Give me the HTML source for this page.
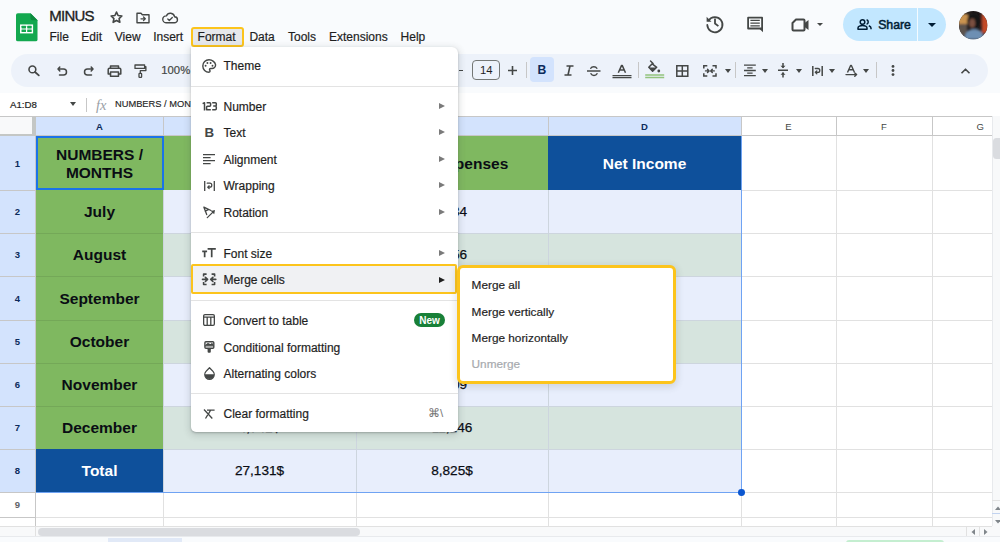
<!DOCTYPE html>
<html><head><meta charset="utf-8">
<style>
*{box-sizing:border-box;margin:0;padding:0}
html,body{width:1000px;height:542px;overflow:hidden;background:#f9fbfd;font-family:"Liberation Sans",sans-serif;position:relative}
.a{position:absolute}
.t{position:absolute;white-space:nowrap;line-height:1}
svg{position:absolute;overflow:visible}
.tm{position:absolute;top:31px;font-size:12px;color:#1f1f1f;white-space:nowrap;line-height:1;-webkit-text-stroke:0.2px #1f1f1f}
.ic{fill:none;stroke:#444746;stroke-width:1.6;stroke-linecap:round;stroke-linejoin:round}
.icf{fill:#444746;stroke:none}
.dd{position:absolute;width:0;height:0;border-top:4px solid #444746;border-left:4px solid transparent;border-right:4px solid transparent}
.tsep{position:absolute;top:62px;width:1px;height:16px;background:#c7c7c7}
.vl{position:absolute;width:1px;background:#e1e1e1}
.hl{position:absolute;height:1px;background:#e1e1e1}
.cell{position:absolute;display:flex;align-items:center;justify-content:center;text-align:center;font-size:15.5px;font-weight:bold;color:#0a0d14;line-height:18px;padding-top:1px}
.num{font-weight:normal;font-size:13.6px;padding-top:1.5px;-webkit-text-stroke:0.25px #0a0d14}
.rh{position:absolute;left:0;width:35px;background:#d3e3fd;color:#0b2b5c;font-size:9.5px;font-weight:bold;display:flex;align-items:center;justify-content:center}
.ch{position:absolute;top:117px;height:19px;padding-bottom:1px;background:#d3e3fd;color:#0b2b5c;font-size:9.5px;font-weight:bold;display:flex;align-items:center;justify-content:center}
.mi{position:absolute;left:223.5px;font-size:12px;color:#1f1f1f;white-space:nowrap;line-height:1;-webkit-text-stroke:0.2px #1f1f1f}
.arr{position:absolute;left:438.5px;width:0;height:0;border-left:6px solid #7a7a7a;border-top:3px solid transparent;border-bottom:3px solid transparent}
.sep{position:absolute;left:191px;width:267px;height:1px;background:#e3e3e3}
</style></head><body>

<!-- ============ TOP BAR ============ -->
<svg style="left:15.5px;top:12.5px" width="21.5" height="28.5" viewBox="0 0 23 30">
  <path d="M2 0H15.5L23 7.5V28A2 2 0 0 1 21 30H2A2 2 0 0 1 0 28V2A2 2 0 0 1 2 0Z" fill="#13a84f"/>
  <path d="M15.5 0V5.5A2 2 0 0 0 17.5 7.5H23Z" fill="#0c8a3e"/>
  <rect x="4.3" y="12" width="14" height="9.6" fill="#fff"/>
  <rect x="5.9" y="13.5" width="4.8" height="2.8" rx=".4" fill="#13a84f"/>
  <rect x="12" y="13.5" width="4.8" height="2.8" rx=".4" fill="#13a84f"/>
  <rect x="5.9" y="17.4" width="4.8" height="2.7" rx=".4" fill="#13a84f"/>
  <rect x="12" y="17.4" width="4.8" height="2.7" rx=".4" fill="#13a84f"/>
</svg>
<div class="t" style="left:49.3px;top:8.3px;font-size:15px;color:#1f1f1f;letter-spacing:-0.75px;-webkit-text-stroke:0.35px #1f1f1f">MINUS</div>
<!-- star -->
<svg style="left:108.8px;top:9.6px" width="15" height="15" viewBox="0 0 24 24"><path class="ic" style="stroke-width:2.6" d="M12 3.3l2.55 5.5 6.05.75-4.45 4.15 1.2 5.95L12 16.7l-5.35 2.95 1.2-5.95L3.4 9.55l6.05-.75z"/></svg>
<!-- move folder -->
<svg style="left:136px;top:12px" width="14" height="12" viewBox="0 0 14 12"><path class="ic" style="stroke-width:1.4" d="M1 1.2h4l1.3 1.5H13v8.1H1z"/><path class="ic" style="stroke-width:1.3" d="M5 6.8h4M7.5 5l1.8 1.8-1.8 1.8"/></svg>
<!-- cloud -->
<svg style="left:161.8px;top:11.8px" width="16" height="12" viewBox="0 0 16 12"><path class="ic" style="stroke-width:1.4" d="M4 10.8h8.3a3 3 0 0 0 .3-6A4.3 4.3 0 0 0 4.4 3.9 3.4 3.4 0 0 0 4 10.8z"/><path class="ic" style="stroke-width:1.3" d="M5.8 7l1.5 1.5 3-3"/></svg>

<div class="tm" style="left:49.5px">File</div>
<div class="tm" style="left:81.3px">Edit</div>
<div class="tm" style="left:114.8px">View</div>
<div class="tm" style="left:153.2px">Insert</div>
<div class="a" style="left:191px;top:27px;width:52.5px;height:20px;border:2px solid #fcc41c;border-radius:3px;background:#e6e8eb"></div>
<div class="tm" style="left:197.6px">Format</div>
<div class="tm" style="left:249.4px">Data</div>
<div class="tm" style="left:288px">Tools</div>
<div class="tm" style="left:329px">Extensions</div>
<div class="tm" style="left:400.6px">Help</div>

<!-- right icons -->
<svg style="left:704.6px;top:13.2px" width="20" height="20" viewBox="0 0 20 20"><path class="ic" style="stroke-width:1.8" d="M3.6 7.4A7.6 7.6 0 1 1 2.3 12"/><path class="icf" d="M1.6 3.8v4.9h4.9z"/><path class="ic" style="stroke-width:1.8;stroke-linecap:butt" d="M10 5.6v4.9l3.4 2.6"/></svg>
<svg style="left:746px;top:15px" width="19" height="18" viewBox="0 0 19 18"><path fill="none" stroke="#444746" stroke-width="1.8" stroke-linejoin="round" d="M2.1 2.7H16.1V13.5H2.1z"/><path fill="#444746" d="M12.5 13H17V17.3z"/><path stroke="#444746" stroke-width="1.3" d="M4.4 5.4h9.4M4.4 8.1h9.4M4.4 10.8h9.4"/></svg>
<svg style="left:791px;top:18px" width="19" height="14" viewBox="0 0 19 14">
  <path class="ic" style="stroke-width:2" d="M5 1.5h7.5a1 1 0 0 1 1 1v9a1 1 0 0 1-1 1H2.5a1 1 0 0 1-1-1V5z"/><path class="icf" d="M13 5.5l4.5-3.5v10L13 8.5z"/>
</svg>
<div class="dd" style="left:817px;top:22.5px;border-top-width:3.5px;border-left-width:3.5px;border-right-width:3.5px"></div>

<div class="a" style="left:842.5px;top:7.5px;width:103px;height:33px;border-radius:16.5px;background:#c2e7ff"></div>
<div class="a" style="left:917px;top:7.5px;width:1px;height:33px;background:#f4fbff"></div>
<svg style="left:857px;top:18.5px" width="15" height="11" viewBox="0 0 15 11">
  <circle cx="5.5" cy="3" r="2.3" fill="none" stroke="#001d35" stroke-width="1.5"/>
  <path d="M1 10.2v-1.2c0-1.5 2.2-2.6 4.5-2.6s4.5 1.1 4.5 2.6v1.2z" fill="none" stroke="#001d35" stroke-width="1.5" stroke-linejoin="round"/>
  <path d="M9.6 0.8a2.3 2.3 0 0 1 0 4.4M11.8 6.8c1.3.5 2.2 1.2 2.2 2.2v1.2" fill="none" stroke="#001d35" stroke-width="1.5"/>
</svg>
<div class="t" style="left:878.2px;top:19px;font-size:12.3px;color:#001d35;-webkit-text-stroke:0.5px #001d35;letter-spacing:-0.05px">Share</div>
<div class="dd" style="left:927.8px;top:23px;border-top:4px solid #001d35"></div>

<!-- avatar -->
<svg style="left:958.6px;top:10.6px" width="28.4" height="28.4" viewBox="0 0 28 28">
<defs><clipPath id="av"><circle cx="14" cy="14" r="14"/></clipPath><filter id="bl"><feGaussianBlur stdDeviation="0.9"/></filter></defs>
<g clip-path="url(#av)">
<rect width="28" height="28" fill="#231d1d"/>
<g filter="url(#bl)">
<rect x="-1" y="3" width="10" height="10" fill="#c99350"/>
<rect x="-1" y="13" width="9" height="12" fill="#5b534d"/>
<rect x="22.5" y="2" width="7" height="20" fill="#c24a26"/>
<ellipse cx="15" cy="10" rx="7" ry="8" fill="#141214"/>
<ellipse cx="13" cy="12" rx="3" ry="4.5" fill="#7a5040"/>
<path d="M5 28 C6 20 10 18 15 18 C20 18 24 20 25 28z" fill="#6d8fb3"/>
</g>
</g>
</svg>

<!-- ============ TOOLBAR ============ -->
<div class="a" style="left:11px;top:53.5px;width:976.5px;height:33px;border-radius:16.5px;background:#edf2fa"></div>
<!-- search -->
<svg style="left:28px;top:65px" width="12" height="11" viewBox="0 0 12 11"><circle cx="4.4" cy="4.4" r="3.4" class="ic" style="stroke-width:1.6"/><path class="ic" style="stroke-width:1.8" d="M7 7l3.8 3.4"/></svg>
<!-- undo -->
<svg style="left:57px;top:66px" width="11" height="10" viewBox="0 0 11 10"><path class="ic" style="stroke-width:1.5" d="M2.8 1L1 3l1.8 2M1.2 3h5.3a3 3 0 0 1 0 6H2.5"/></svg>
<!-- redo -->
<svg style="left:83px;top:66px" width="11" height="10" viewBox="0 0 11 10"><path class="ic" style="stroke-width:1.5" d="M8.2 1L10 3l-1.8 2M9.8 3H4.5a3 3 0 0 0 0 6h4"/></svg>
<!-- print -->
<svg style="left:107px;top:64.5px" width="15" height="12" viewBox="0 0 15 12"><path class="ic" style="stroke-width:1.5" d="M3.5 3.2V1h8v2.2M3.5 9H1.2V4.5a1.3 1.3 0 0 1 1.3-1.3h10a1.3 1.3 0 0 1 1.3 1.3V9h-2.3"/><rect x="3.5" y="7" width="8" height="4.2" class="ic" style="stroke-width:1.5"/></svg>
<!-- paint format -->
<svg style="left:133.5px;top:64px" width="13" height="14" viewBox="0 0 13 14"><path class="ic" style="stroke-width:1.3" d="M1 1h9.6v3.4H1zM10.6 2.7h1.3v3.9H6.3v2.7"/><rect x="5" y="9.3" width="2.6" height="4" rx=".6" class="ic" style="stroke-width:1.3"/></svg>
<div class="t" style="left:161.3px;top:65px;font-size:11.3px;color:#444746;-webkit-text-stroke:0.2px #444746">100%</div>

<div class="a" style="left:458.6px;top:69.5px;width:4.5px;height:1.5px;background:#444746"></div>
<div class="a" style="left:472px;top:60px;width:28px;height:20px;border:1px solid #747775;border-radius:4px"></div>
<div class="t" style="left:480px;top:65px;font-size:11.3px;color:#1f1f1f">14</div>
<svg style="left:507.5px;top:65.5px" width="9" height="9" viewBox="0 0 9 9"><path class="ic" style="stroke-width:1.6;stroke-linecap:butt" d="M4.5 0v9M0 4.5h9"/></svg>
<div class="tsep" style="left:525.5px"></div>
<div class="a" style="left:529.7px;top:57px;width:24.3px;height:24.5px;border-radius:4px;background:#d3e3fd"></div>
<div class="t" style="left:537.4px;top:64.2px;font-size:12.2px;font-weight:bold;color:#0b2b5c">B</div>
<svg style="left:563.5px;top:64.5px" width="10" height="11" viewBox="0 0 10 11"><path class="ic" style="stroke-width:1.6;stroke-linecap:butt" d="M2.5 1H9.5M0.5 10H7.5M6 1L4 10"/></svg>
<svg style="left:587.3px;top:64.5px" width="14" height="12" viewBox="0 0 14 12"><path class="ic" style="stroke-width:1.5;stroke-linecap:butt" d="M0 6h13.5"/><path class="ic" style="stroke-width:1.5" d="M3.8 3.3a3.2 2.5 0 0 1 6 0M4 8.8a3.2 2.5 0 0 0 6 0"/></svg>
<svg style="left:611.5px;top:62.5px" width="20" height="15" viewBox="0 0 20 15"><path class="ic" style="stroke-width:1.5;stroke-linecap:butt" d="M6.3 9.8L9.6 2.4h.6l3.3 7.4M7.5 7h4.8"/><path d="M0.5 12.6h19M0.5 14.6h19" stroke="#444746" stroke-width="1.3"/></svg>
<div class="tsep" style="left:638px"></div>
<svg style="left:645px;top:60px" width="20" height="19" viewBox="0 0 20 19"><path d="M5.5 1l2.6 2.6" stroke="#444746" stroke-width="1.4" stroke-linecap="round"/><path d="M7.2 3.8L3.8 7.3l3.8 4 4.1-4z" fill="none" stroke="#444746" stroke-width="1.5" stroke-linejoin="round"/><path d="M4.4 7.5h7.2L7.6 11.5z" fill="#444746"/><circle cx="13.8" cy="11" r="1.4" fill="#444746"/><path d="M0.2 15h19M0.2 17.5h19" stroke="#93c47d" stroke-width="1.3"/></svg>
<svg style="left:675.8px;top:64.5px" width="13" height="12" viewBox="0 0 13 12"><path class="ic" style="stroke-width:1.5;stroke-linecap:butt;stroke-linejoin:miter" d="M0.8 0.8h11v10.5h-11zM6.3 0.8v10.5M0.8 6h11"/></svg>
<svg style="left:702.8px;top:64.5px" width="14" height="12" viewBox="0 0 14 12"><path class="ic" style="stroke-width:1.5;stroke-linecap:butt;stroke-linejoin:miter" d="M0.8 3.5V0.8h3.5M0.8 8.3v2.7h3.5M13 3.5V0.8H9.5M13 8.3v2.7H9.5"/><path class="ic" style="stroke-width:1.4" d="M2.5 5.9h3.3M4.5 4.2l1.6 1.7-1.6 1.7M11.3 5.9H8M9.3 4.2L7.7 5.9l1.6 1.7"/></svg>
<div class="dd" style="left:724.5px;top:68.5px;border-top-width:4px;border-left-width:3px;border-right-width:3px"></div>
<div class="tsep" style="left:735px"></div>
<svg style="left:743.8px;top:64px" width="12" height="12" viewBox="0 0 12 12"><path stroke="#444746" stroke-width="1.3" d="M0 1.1h11.8M3.2 3.9h5.4M0 6.5h11.8M3.2 9.1h5.4M0 11.7h11.8"/></svg>
<div class="dd" style="left:762.3px;top:68.5px;border-top-width:4px;border-left-width:3px;border-right-width:3px"></div>
<svg style="left:778px;top:63px" width="10" height="14.5" viewBox="0 0 10 14.5"><path stroke="#444746" stroke-width="1.5" d="M0 7.2h10M5 0v4.8M5 9.5v5"/><path fill="#444746" d="M2.5 2.8L5 5.3l2.5-2.5zM2.5 11.7L5 9.2l2.5 2.5z"/></svg>
<div class="dd" style="left:795.6px;top:68.5px;border-top-width:4px;border-left-width:3px;border-right-width:3px"></div>
<svg style="left:811.8px;top:65.5px" width="11" height="10" viewBox="0 0 11 10"><path stroke="#444746" stroke-width="1.5" d="M.8 0v10M10.2 0v10"/><path class="ic" style="stroke-width:1.3" d="M3.3 2.5h2.6a1.9 1.9 0 0 1 0 3.8H3.5M4.8 4.9L3.3 6.3l1.5 1.4"/></svg>
<div class="dd" style="left:828.9px;top:68.5px;border-top-width:4px;border-left-width:3px;border-right-width:3px"></div>
<svg style="left:845.5px;top:64.5px" width="12" height="12" viewBox="0 0 12 12"><path class="ic" style="stroke-width:1.4;stroke-linecap:butt" d="M1.5 7.5L4.6 0.5h.8l3.1 7M2.8 4.8h4.4"/><path class="ic" style="stroke-width:1.4" d="M0 9.6h10.5M8.8 7.9l1.8 1.7-1.8 1.7"/></svg>
<div class="dd" style="left:862.7px;top:68.5px;border-top-width:4px;border-left-width:3px;border-right-width:3px"></div>
<div class="tsep" style="left:875.5px"></div>
<svg style="left:890.5px;top:65px" width="4" height="11" viewBox="0 0 4 11"><circle cx="2" cy="1.4" r="1.4" fill="#444746"/><circle cx="2" cy="5.5" r="1.4" fill="#444746"/><circle cx="2" cy="9.6" r="1.4" fill="#444746"/></svg>
<svg style="left:961px;top:68px" width="9" height="6" viewBox="0 0 9 6"><path class="ic" style="stroke-width:1.6;stroke-linecap:butt" d="M0.5 5.3L4.5 1.2l4 4.1"/></svg>

<!-- ============ FORMULA BAR ============ -->
<div class="a" style="left:0;top:93px;width:1000px;height:23px;background:#fff"></div>
<div class="t" style="left:10px;top:99.8px;font-size:9.7px;color:#1f1f1f;-webkit-text-stroke:0.2px #1f1f1f">A1:D8</div>
<div class="dd" style="left:69.5px;top:102px;border-top-width:4px;border-left-width:3px;border-right-width:3px;margin-left:0.5px"></div>
<div class="a" style="left:86px;top:98px;width:1px;height:14px;background:#c7c7c7"></div>
<div class="t" style="left:96px;top:98px;font-size:14.5px;color:#9aa0a6;font-family:'Liberation Serif',serif;font-style:italic">fx</div>
<div class="t" style="left:115px;top:99.6px;font-size:9.3px;color:#1f1f1f;-webkit-text-stroke:0.15px #1f1f1f">NUMBERS / MONTHS</div>

<!-- ============ GRID ============ -->
<div class="a" style="left:0;top:116px;width:1000px;height:426px;background:#fff"></div>
<div class="a" style="left:0;top:117px;width:36px;height:19px;background:#c4c7c5"></div>
<div class="a" style="left:0;top:117px;width:32px;height:16.5px;background:#f8f9fa"></div>
<div class="ch" style="left:36px;width:127px;background:#d3e3fd;color:#0b2b5c;font-weight:bold;">A</div>
<div class="ch" style="left:163px;width:193px;background:#d3e3fd;color:#0b2b5c;font-weight:bold;">B</div>
<div class="ch" style="left:356px;width:192px;background:#d3e3fd;color:#0b2b5c;font-weight:bold;">C</div>
<div class="ch" style="left:548px;width:193px;background:#d3e3fd;color:#0b2b5c;font-weight:bold;">D</div>
<div class="ch" style="left:741px;width:95px;background:#ffffff;color:#444746;font-weight:normal;">E</div>
<div class="ch" style="left:836px;width:96px;background:#ffffff;color:#444746;font-weight:normal;">F</div>
<div class="ch" style="left:932px;width:60px;background:#ffffff;color:#444746;font-weight:normal;justify-content:flex-end;padding-right:8px;">G</div>
<div class="a" style="left:163px;top:117px;width:1px;height:19px;background:#c7c7c7"></div>
<div class="a" style="left:356px;top:117px;width:1px;height:19px;background:#c7c7c7"></div>
<div class="a" style="left:548px;top:117px;width:1px;height:19px;background:#c7c7c7"></div>
<div class="a" style="left:741px;top:117px;width:1px;height:19px;background:#c7c7c7"></div>
<div class="a" style="left:836px;top:117px;width:1px;height:19px;background:#c7c7c7"></div>
<div class="a" style="left:932px;top:117px;width:1px;height:19px;background:#c7c7c7"></div>
<div class="a" style="left:992px;top:117px;width:1px;height:19px;background:#c7c7c7"></div>
<div class="a" style="left:0;top:116px;width:992px;height:1px;background:#c7c7c7"></div>
<div class="a" style="left:35px;top:135px;width:957px;height:1px;background:#c7c7c7"></div>
<div class="rh" style="top:136px;height:54px;background:#d3e3fd;color:#0b2b5c;font-weight:bold;">1</div>
<div class="rh" style="top:190px;height:43px;background:#d3e3fd;color:#0b2b5c;font-weight:bold;">2</div>
<div class="rh" style="top:233px;height:43px;background:#d3e3fd;color:#0b2b5c;font-weight:bold;">3</div>
<div class="rh" style="top:276px;height:44px;background:#d3e3fd;color:#0b2b5c;font-weight:bold;">4</div>
<div class="rh" style="top:320px;height:43px;background:#d3e3fd;color:#0b2b5c;font-weight:bold;">5</div>
<div class="rh" style="top:363px;height:43px;background:#d3e3fd;color:#0b2b5c;font-weight:bold;">6</div>
<div class="rh" style="top:406px;height:43px;background:#d3e3fd;color:#0b2b5c;font-weight:bold;">7</div>
<div class="rh" style="top:449px;height:43px;background:#d3e3fd;color:#0b2b5c;font-weight:bold;">8</div>
<div class="rh" style="top:492px;height:25px;background:#ffffff;color:#5f6368;font-weight:bold;">9</div>
<div class="rh" style="top:517px;height:9px;background:#ffffff;color:#5f6368;font-weight:bold;"></div>
<div class="a" style="left:0;top:190px;width:35px;height:1px;background:#c7c7c7"></div>
<div class="a" style="left:0;top:233px;width:35px;height:1px;background:#c7c7c7"></div>
<div class="a" style="left:0;top:276px;width:35px;height:1px;background:#c7c7c7"></div>
<div class="a" style="left:0;top:320px;width:35px;height:1px;background:#c7c7c7"></div>
<div class="a" style="left:0;top:363px;width:35px;height:1px;background:#c7c7c7"></div>
<div class="a" style="left:0;top:406px;width:35px;height:1px;background:#c7c7c7"></div>
<div class="a" style="left:0;top:449px;width:35px;height:1px;background:#c7c7c7"></div>
<div class="a" style="left:0;top:492px;width:35px;height:1px;background:#c7c7c7"></div>
<div class="a" style="left:0;top:517px;width:35px;height:1px;background:#c7c7c7"></div>
<div class="a" style="left:0;top:526px;width:35px;height:1px;background:#c7c7c7"></div>
<div class="a" style="left:35px;top:136px;width:1px;height:390px;background:#c7c7c7"></div>
<div class="cell " style="left:36px;top:136px;width:127px;height:54px;background:#7fb860;">NUMBERS /<br>MONTHS</div>
<div class="cell " style="left:36px;top:190px;width:127px;height:43px;background:#7fb860;">July</div>
<div class="cell " style="left:36px;top:233px;width:127px;height:43px;background:#7fb860;">August</div>
<div class="cell " style="left:36px;top:276px;width:127px;height:44px;background:#7fb860;">September</div>
<div class="cell " style="left:36px;top:320px;width:127px;height:43px;background:#7fb860;">October</div>
<div class="cell " style="left:36px;top:363px;width:127px;height:43px;background:#7fb860;">November</div>
<div class="cell " style="left:36px;top:406px;width:127px;height:43px;background:#7fb860;">December</div>
<div class="cell " style="left:36px;top:449px;width:127px;height:43px;background:#0e509b;color:#ffffff;">Total</div>
<div class="cell " style="left:163px;top:136px;width:193px;height:54px;background:#7fb860;">Total Income</div>
<div class="cell " style="left:356px;top:136px;width:192px;height:54px;background:#7fb860;">Total Expenses</div>
<div class="cell " style="left:548px;top:136px;width:193px;height:54px;background:#0e509b;color:#ffffff;">Net Income</div>
<div class="cell num" style="left:163px;top:190px;width:193px;height:43px;background:#e8eefc;">4,521$</div>
<div class="cell num" style="left:356px;top:190px;width:192px;height:43px;background:#e8eefc;">1234</div>
<div class="cell num" style="left:548px;top:190px;width:193px;height:43px;background:#e8eefc;"></div>
<div class="cell num" style="left:163px;top:233px;width:193px;height:43px;background:#d6e4de;">4,356$</div>
<div class="cell num" style="left:356px;top:233px;width:192px;height:43px;background:#d6e4de;">1456</div>
<div class="cell num" style="left:548px;top:233px;width:193px;height:43px;background:#d6e4de;"></div>
<div class="cell num" style="left:163px;top:276px;width:193px;height:44px;background:#e8eefc;">4,498$</div>
<div class="cell num" style="left:356px;top:276px;width:192px;height:44px;background:#e8eefc;">1389</div>
<div class="cell num" style="left:548px;top:276px;width:193px;height:44px;background:#e8eefc;"></div>
<div class="cell num" style="left:163px;top:320px;width:193px;height:43px;background:#d6e4de;">4,612$</div>
<div class="cell num" style="left:356px;top:320px;width:192px;height:43px;background:#d6e4de;">1457</div>
<div class="cell num" style="left:548px;top:320px;width:193px;height:43px;background:#d6e4de;"></div>
<div class="cell num" style="left:163px;top:363px;width:193px;height:43px;background:#e8eefc;">4,402$</div>
<div class="cell num" style="left:356px;top:363px;width:192px;height:43px;background:#e8eefc;">1509</div>
<div class="cell num" style="left:548px;top:363px;width:193px;height:43px;background:#e8eefc;"></div>
<div class="cell num" style="left:163px;top:406px;width:193px;height:43px;background:#d6e4de;">4,742$</div>
<div class="cell num" style="left:356px;top:406px;width:192px;height:43px;background:#d6e4de;">11,146</div>
<div class="cell num" style="left:548px;top:406px;width:193px;height:43px;background:#d6e4de;"></div>
<div class="cell num" style="left:163px;top:449px;width:193px;height:43px;background:#e8eefc;">27,131$</div>
<div class="cell num" style="left:356px;top:449px;width:192px;height:43px;background:#e8eefc;">8,825$</div>
<div class="cell num" style="left:548px;top:449px;width:193px;height:43px;background:#e8eefc;"></div>
<div class="a" style="left:163px;top:190px;width:1px;height:302px;background:#cdd5de"></div>
<div class="a" style="left:356px;top:190px;width:1px;height:302px;background:#cdd5de"></div>
<div class="a" style="left:548px;top:190px;width:1px;height:302px;background:#cdd5de"></div>
<div class="a" style="left:163px;top:233px;width:578px;height:1px;background:#cdd5de"></div>
<div class="a" style="left:163px;top:276px;width:578px;height:1px;background:#cdd5de"></div>
<div class="a" style="left:163px;top:320px;width:578px;height:1px;background:#cdd5de"></div>
<div class="a" style="left:163px;top:363px;width:578px;height:1px;background:#cdd5de"></div>
<div class="a" style="left:163px;top:406px;width:578px;height:1px;background:#cdd5de"></div>
<div class="a" style="left:163px;top:449px;width:578px;height:1px;background:#cdd5de"></div>
<div class="a" style="left:36px;top:233px;width:127px;height:1px;background:#74a858"></div>
<div class="a" style="left:36px;top:276px;width:127px;height:1px;background:#74a858"></div>
<div class="a" style="left:36px;top:320px;width:127px;height:1px;background:#74a858"></div>
<div class="a" style="left:36px;top:363px;width:127px;height:1px;background:#74a858"></div>
<div class="a" style="left:36px;top:406px;width:127px;height:1px;background:#74a858"></div>
<div class="a" style="left:836px;top:136px;width:1px;height:390px;background:#e1e1e1"></div>
<div class="a" style="left:932px;top:136px;width:1px;height:390px;background:#e1e1e1"></div>
<div class="a" style="left:992px;top:136px;width:1px;height:390px;background:#e1e1e1"></div>
<div class="a" style="left:741px;top:190px;width:251px;height:1px;background:#e1e1e1"></div>
<div class="a" style="left:741px;top:233px;width:251px;height:1px;background:#e1e1e1"></div>
<div class="a" style="left:741px;top:276px;width:251px;height:1px;background:#e1e1e1"></div>
<div class="a" style="left:741px;top:320px;width:251px;height:1px;background:#e1e1e1"></div>
<div class="a" style="left:741px;top:363px;width:251px;height:1px;background:#e1e1e1"></div>
<div class="a" style="left:741px;top:406px;width:251px;height:1px;background:#e1e1e1"></div>
<div class="a" style="left:741px;top:449px;width:251px;height:1px;background:#e1e1e1"></div>
<div class="a" style="left:741px;top:492px;width:251px;height:1px;background:#e1e1e1"></div>
<div class="a" style="left:741px;top:517px;width:251px;height:1px;background:#e1e1e1"></div>
<div class="a" style="left:163px;top:492px;width:1px;height:34px;background:#e1e1e1"></div>
<div class="a" style="left:356px;top:492px;width:1px;height:34px;background:#e1e1e1"></div>
<div class="a" style="left:548px;top:492px;width:1px;height:34px;background:#e1e1e1"></div>
<div class="a" style="left:741px;top:492px;width:1px;height:34px;background:#e1e1e1"></div>
<div class="a" style="left:36px;top:517px;width:705px;height:1px;background:#e1e1e1"></div>
<div class="a" style="left:741px;top:136px;width:1px;height:357px;background:#6fa3f3"></div>
<div class="a" style="left:36px;top:492px;width:706px;height:1px;background:#6fa3f3"></div>
<div class="a" style="left:36px;top:136px;width:128px;height:54px;border:2px solid #1a73e8"></div>
<div class="a" style="left:738.2px;top:489.4px;width:6.8px;height:6.8px;border-radius:50%;background:#0b57d0"></div>
<div class="a" style="left:0;top:526px;width:1000px;height:11px;background:#f8f9fa"></div>
<div class="a" style="left:0;top:526px;width:992px;height:1px;background:#e1e1e1"></div>
<div class="a" style="left:38px;top:528px;width:322px;height:7.5px;border-radius:4px;background:#dadce0"></div>
<div class="a" style="left:35px;top:526px;width:1px;height:10px;background:#e1e1e1"></div>
<div class="a" style="left:0;top:537px;width:1000px;height:5px;background:#f9fbfd"></div>
<div class="a" style="left:0;top:536px;width:1000px;height:1px;background:#e8eaed"></div>
<div class="a" style="left:108px;top:537.5px;width:74px;height:5px;background:#e1e9f7"></div>
<div class="a" style="left:846px;top:539.5px;width:98px;height:3px;border-radius:3px 3px 0 0;background:#c4eed0"></div>
<div class="a" style="left:992px;top:116px;width:8px;height:410px;background:#f8f9fa"></div>
<div class="a" style="left:992px;top:116px;width:1px;height:410px;background:#e8eaed"></div>
<div class="a" style="left:993px;top:138px;width:7px;height:21px;border-radius:3.5px 0 0 3.5px;background:#dadce0"></div>
<div class="a" style="left:992px;top:500px;width:8px;height:1px;background:#e1e1e1"></div>
<svg style="left:994.5px;top:506px" width="6" height="4" viewBox="0 0 6 4"><path d="M0 4L3 0.5 6 4z" fill="#80868b"/></svg>
<div class="a" style="left:992px;top:513px;width:8px;height:1px;background:#c2d3f0"></div>
<svg style="left:994.5px;top:519.5px" width="6" height="4" viewBox="0 0 6 4"><path d="M0 0L3 3.5 6 0z" fill="#80868b"/></svg>
<div class="a" style="left:966px;top:526px;width:1px;height:10px;background:#e1e1e1"></div>
<div class="a" style="left:979px;top:526px;width:1px;height:10px;background:#e1e1e1"></div>
<svg style="left:970.5px;top:529px" width="4" height="6" viewBox="0 0 4 6"><path d="M4 0L0.5 3 4 6z" fill="#80868b"/></svg>
<svg style="left:984px;top:529px" width="4" height="6" viewBox="0 0 4 6"><path d="M0 0L3.5 3 0 6z" fill="#80868b"/></svg>

<!-- ============ FORMAT MENU ============ -->
<div class="a" style="left:191px;top:47px;width:267px;height:385px;background:#fff;border-radius:0 6px 5px 5px;box-shadow:0 2px 6px 2px rgba(60,64,67,.15),0 1px 2px rgba(60,64,67,.3)"></div>
<!-- Theme -->
<svg style="left:202px;top:58.8px" width="14" height="14" viewBox="0 0 14 14"><path class="ic" style="stroke-width:1.4" d="M7 .8A6.2 6.2 0 0 0 7 13.2c.7 0 1.1-.5 1.1-1.1 0-.3-.1-.5-.3-.8-.2-.2-.3-.5-.3-.7 0-.6.5-1.1 1.1-1.1h1.3a3.7 3.7 0 0 0 3.7-3.7C13.2 3.3 10.4.8 7 .8z"/><circle cx="3.6" cy="6.8" r=".95" fill="#444746"/><circle cx="5.4" cy="4" r=".95" fill="#444746"/><circle cx="8.6" cy="4" r=".95" fill="#444746"/><circle cx="10.5" cy="6.8" r=".95" fill="#444746"/></svg>
<div class="mi" style="top:60.3px">Theme</div>
<div class="sep" style="top:85.8px;height:1.2px"></div>
<!-- Number -->
<svg style="left:201.5px;top:101.8px" width="15" height="8.4" viewBox="0 0 15 8.4"><path fill="none" stroke="#444746" stroke-width="1.5" stroke-linejoin="round" d="M0.6 1.6L2.5 .75V8.4M4.6 .75h3.1a.9.9 0 0 1 .9.9v1.6a.9.9 0 0 1-.9.9H5.5a.9.9 0 0 0-.9.9V7.65h4.2M10.2 .75h3.2a.9.9 0 0 1 .9.9v1.5a.9.9 0 0 1-.9.9H11.2M13.4 4.05a.9.9 0 0 1 .9.9V6.75a.9.9 0 0 1-.9.9H10.2"/></svg>
<div class="mi" style="top:100.5px">Number</div>
<div class="arr" style="top:102.5px"></div>
<!-- Text -->
<div class="t" style="left:204.6px;top:126px;font-size:13.3px;font-weight:bold;color:#444746">B</div>
<div class="mi" style="top:127.2px">Text</div>
<div class="arr" style="top:129.2px"></div>
<!-- Alignment -->
<svg style="left:203px;top:154px" width="12" height="11" viewBox="0 0 12 11"><path stroke="#444746" stroke-width="1.2" d="M0 .6h12M0 3.6h7.6M0 6.6h12M0 9.6h7.6"/></svg>
<div class="mi" style="top:153.8px">Alignment</div>
<div class="arr" style="top:155.8px"></div>
<!-- Wrapping -->
<svg style="left:203.5px;top:181px" width="12" height="10" viewBox="0 0 12 10"><path stroke="#444746" stroke-width="1.3" d="M.7 0v10M10.3 0v10"/><path class="ic" style="stroke-width:1.2" d="M3.2 2.2h2.6a2 2 0 0 1 0 4H3.9M5.2 4.8L3.7 6.2l1.5 1.4"/></svg>
<div class="mi" style="top:180.4px">Wrapping</div>
<div class="arr" style="top:182.4px"></div>
<!-- Rotation -->
<svg style="left:198px;top:202px" width="24" height="20" viewBox="0 0 24 20"><path fill="none" stroke="#444746" stroke-width="1.3" stroke-linecap="round" stroke-linejoin="round" d="M8.7 12.6L5.9 5.2 13 8.5M7.2 9.1l3.6-1.7M9.3 15.6L15.2 9.9"/><path fill="#444746" d="M17 8.1L12.9 8.9 16.2 12.2z"/></svg>
<div class="mi" style="top:207px">Rotation</div>
<div class="arr" style="top:209px"></div>
<div class="sep" style="top:232.3px;height:1.2px"></div>
<!-- Font size -->
<svg style="left:202.4px;top:248.3px" width="14" height="10" viewBox="0 0 14 10"><path stroke="#444746" stroke-width="1.7" d="M0.2 3.3h4.9M2.65 3.3V9.3M5.6 0.9h8.2M9.7 .9V9.3"/></svg>
<div class="mi" style="top:247.7px">Font size</div>
<div class="arr" style="top:249.7px"></div>
<!-- Merge cells (highlight) -->
<div class="a" style="left:190.8px;top:264px;width:266.5px;height:30px;background:#f0f1f3;border:2.6px solid #fcc41c;border-radius:2px"></div>
<svg style="left:198px;top:268px" width="24" height="22" viewBox="0 0 24 22"><path fill="none" stroke="#444746" stroke-width="1.6" stroke-linejoin="round" d="M5.6 8.6V6.1H8.6M5.6 13.9V16.5H8.6M16.6 8.6V6.1H13.6M16.6 13.9V16.5H13.6"/><path fill="none" stroke="#444746" stroke-width="1.6" stroke-linejoin="round" stroke-linecap="round" d="M4.5 11.4H9.4M7.4 9.3L9.6 11.4 7.4 13.5M17.8 11.4H12.9M14.9 9.3L12.7 11.4 14.9 13.5"/></svg>
<div class="mi" style="top:274.2px">Merge cells</div>
<div class="arr" style="top:276.5px;border-left-color:#1f1f1f"></div>
<div class="sep" style="top:299.5px;height:1.2px"></div>
<!-- Convert to table -->
<svg style="left:203px;top:314px" width="12" height="12" viewBox="0 0 12 12"><rect x=".65" y=".65" width="10.7" height="10.7" rx="1.3" class="ic" style="stroke-width:1.3"/><path stroke="#444746" stroke-width="1.3" d="M.6 3.2h10.8M4.2 3.2v8M7.8 3.2v8"/></svg>
<div class="mi" style="top:315px">Convert to table</div>
<div class="a" style="left:414px;top:313.4px;width:31px;height:13.4px;border-radius:7px;background:#188038"></div>
<div class="t" style="left:419.3px;top:315.8px;font-size:10px;font-weight:bold;color:#fff">New</div>
<!-- Conditional formatting -->
<svg style="left:198px;top:336px" width="24" height="22" viewBox="0 0 24 22"><rect x="6.9" y="5.7" width="8.9" height="6.6" rx="1" fill="none" stroke="#444746" stroke-width="1.4"/><path d="M6.9 9.8H15.8" stroke="#444746" stroke-width="1.3"/><path d="M7.6 8.6c.9-.3 1.2-1.6 2.5-1.6 1 0 1.3 1.2 2.4 1 .7-.1 1-1 1.3-1.6.2.5.3 1 1.3 1.1V9.2H7.6z" fill="#444746"/><rect x="9.6" y="12.2" width="3.2" height="4.6" rx="1" fill="#444746"/></svg>
<div class="mi" style="top:341.6px">Conditional formatting</div>
<!-- Alternating colors -->
<svg style="left:203.6px;top:366.8px" width="11" height="12" viewBox="0 0 11 12"><path class="ic" style="stroke-width:1.3" d="M5.5.8L2 4.4a4.7 4.7 0 1 0 7 0z"/><path fill="#444746" d="M.7 7.3h9.6a4.8 4.8 0 0 1-9.6 0z"/></svg>
<div class="mi" style="top:368.2px">Alternating colors</div>
<div class="sep" style="top:393px;height:1.2px"></div>
<!-- Clear formatting -->
<svg style="left:203.4px;top:409px" width="12" height="10" viewBox="0 0 12 10"><path class="ic" style="stroke-width:1.3;stroke-linecap:butt" d="M4 1.1h7.6M7.6 1.1L5.2 5.5M1 .5l8.3 9M2.5 9.5L4.7 5.9"/></svg>
<div class="mi" style="top:408.2px">Clear formatting</div>
<div class="t" style="left:428px;top:407.8px;font-size:11.5px;color:#757575">⌘\</div>

<!-- ============ SUBMENU ============ -->
<div class="a" style="left:457.3px;top:265.3px;width:218.7px;height:118.5px;background:#fff;border:3px solid #fcc41c;border-radius:6px;box-shadow:0 2px 6px 2px rgba(60,64,67,.12)"></div>
<div class="t" style="left:471.6px;top:280px;font-size:11.8px;color:#1f1f1f;-webkit-text-stroke:0.2px #1f1f1f">Merge all</div>
<div class="t" style="left:471.6px;top:306.5px;font-size:11.8px;color:#1f1f1f;-webkit-text-stroke:0.2px #1f1f1f">Merge vertically</div>
<div class="t" style="left:471.6px;top:332.7px;font-size:11.8px;color:#1f1f1f;-webkit-text-stroke:0.2px #1f1f1f">Merge horizontally</div>
<div class="t" style="left:471.6px;top:358.8px;font-size:11.8px;color:#a7aaae;-webkit-text-stroke:0.2px #a7aaae">Unmerge</div>

</body></html>
